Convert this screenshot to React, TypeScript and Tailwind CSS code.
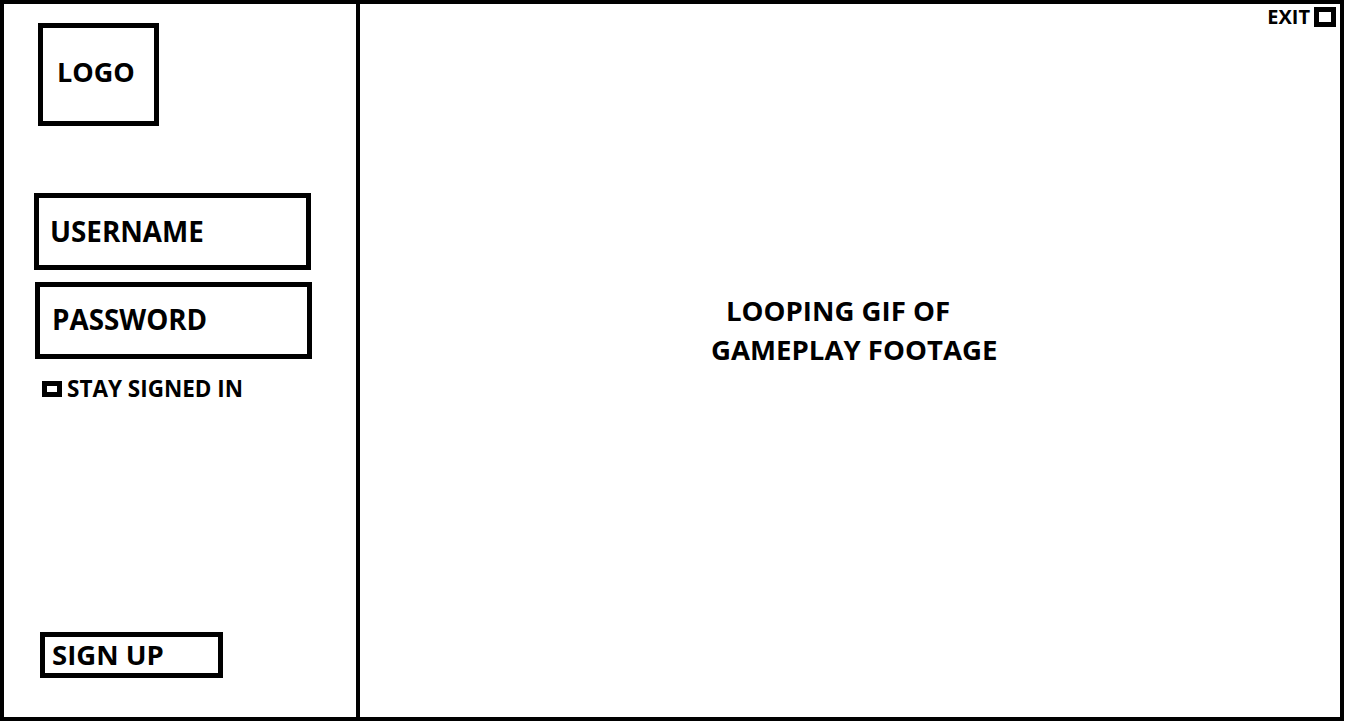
export default function App() {
  return (
    <div className="h-[722px] w-[1346px] bg-white font-['Open_Sans',sans-serif] font-bold text-black">
      <div className="flex h-[721px] w-[1344px] border-4 border-black">
        {/* login column */}
        <aside className="flex w-[356px] shrink-0 flex-col border-r-4 border-black pb-[39px]">
          <div className="ml-[34px] mt-[19px] flex h-[103px] w-[121px] items-center border-[5px] border-black pb-[6px] pl-[14px] text-[27px] leading-none">
            LOGO
          </div>

          <div className="ml-[30px] mt-[67px] flex h-[77px] w-[277px] items-center border-[5px] border-black pl-[11px] text-[27.8px] leading-none">
            USERNAME
          </div>
          <div className="ml-[31px] mt-[12px] flex h-[77px] w-[277px] items-center border-[5px] border-black pb-[2px] pl-[12px] text-[27.8px] leading-none">
            PASSWORD
          </div>

          <label className="ml-[38px] mt-[19px] flex items-center gap-[5px] text-[22.5px] leading-none">
            <span className="h-[16px] w-[20px] border-[5px] border-black" />
            STAY SIGNED IN
          </label>

          <div className="ml-[36px] mt-auto flex h-[46px] w-[183px] items-center border-[5px] border-black pl-[7px] text-[27.5px] leading-none">
            SIGN UP
          </div>
        </aside>

        {/* gameplay area */}
        <main className="flex flex-1 flex-col">
          <div className="mt-[3px] flex h-[20px] items-center justify-end gap-[4px] pr-[4px] text-[20px] leading-none">
            <span>EXIT</span>
            <span className="h-[20px] w-[22px] border-[5px] border-black" />
          </div>

          <div className="mt-[264px] flex flex-col items-start pl-[351px] text-[27.6px] leading-[39px]">
            <span className="ml-[15px]">LOOPING GIF OF</span>
            <span>GAMEPLAY FOOTAGE</span>
          </div>
        </main>
      </div>
    </div>
  );
}
